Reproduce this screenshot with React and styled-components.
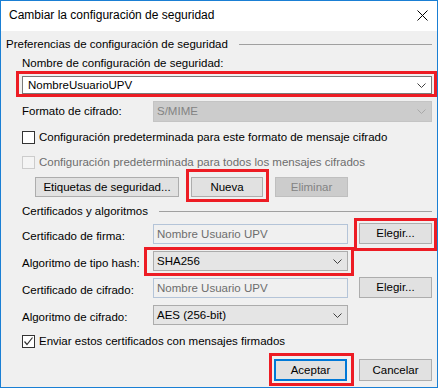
import React from "react";
import styled, { createGlobalStyle } from "styled-components";

const GlobalStyle = createGlobalStyle`
  html, body {
    margin: 0;
    padding: 0;
    background: #ffffff;
  }
  body {
    font-family: "Liberation Sans", Arial, sans-serif;
  }
  * {
    box-sizing: border-box;
  }
`;

const Window = styled.div`
  width: 438px;
  height: 388px;
  border: 1px solid #1a7fd4;
  display: flex;
  flex-direction: column;
  background: #f0f0f0;
  font-size: 11.5px;
  line-height: 15px;
  color: #000000;
`;

const TitleBar = styled.div`
  flex: none;
  height: 30px;
  display: flex;
  align-items: center;
  justify-content: space-between;
  padding: 0 9px 2px 8px;
  background: #ffffff;
  font-size: 12px;
`;

const Client = styled.div`
  flex: 1;
  padding: 0 5px 0 5px;
`;

const GroupHeader = styled.div`
  display: flex;
  align-items: center;
  gap: 11px;
  margin-top: ${p => p.$top}px;
  white-space: nowrap;

  &::after {
    content: "";
    flex: 1;
    height: 1px;
    background: #a0a0a0;
  }
`;

const Section = styled.div`
  padding-left: 16px;
`;

const Label = styled.div`
  margin-top: ${p => p.$top || 0}px;
  white-space: nowrap;
  color: ${p => (p.$disabled ? "#6d6d6d" : "#000000")};
`;

const Mark = styled.div`
  position: relative;
  margin-top: ${p => p.$mt || 0}px;
  justify-self: ${p => p.$justify || "stretch"};
  align-self: ${p => p.$align || "auto"};

  &::after {
    content: "";
    position: absolute;
    top: ${p => -p.$i[0]}px;
    right: ${p => -p.$i[1]}px;
    bottom: ${p => -p.$i[2]}px;
    left: ${p => -p.$i[3]}px;
    border: 3px solid #ed1c24;
    pointer-events: none;
  }
`;

const comboColors = {
  edit: { bg: "#ffffff", border: "#7a7a7a", color: "#000000" },
  list: { bg: "#e5e5e5", border: "#acacac", color: "#000000" },
  disabled: { bg: "#cccccc", border: "#c4c4c4", color: "#838383" },
};

const ComboBox = styled.div`
  height: ${p => p.$h || 20}px;
  display: flex;
  align-items: center;
  justify-content: space-between;
  padding: 0 5px 0 ${p => (p.$variant === "edit" ? 5 : 3)}px;
  border: 1px solid ${p => comboColors[p.$variant].border};
  background: ${p => comboColors[p.$variant].bg};
  color: ${p => comboColors[p.$variant].color};
  white-space: nowrap;
`;

const TextField = styled.div`
  height: 20px;
  display: flex;
  align-items: center;
  padding: 0 3px;
  border: 1px solid #b4c4d8;
  background: #f0f0f0;
  color: #6d6d6d;
  white-space: nowrap;
`;

const Button = styled.div`
  width: ${p => p.$w}px;
  height: ${p => p.$h || 21}px;
  display: flex;
  align-items: center;
  justify-content: center;
  border: ${p => (p.$default ? "2px solid #0078d7" : p.$disabled ? "1px solid #bfbfbf" : "1px solid #adadad")};
  background: ${p => (p.$disabled ? "#cccccc" : "#e1e1e1")};
  color: ${p => (p.$disabled ? "#838383" : "#000000")};
  white-space: nowrap;
`;

const CheckRow = styled.div`
  display: flex;
  align-items: center;
  gap: 4px;
  margin-top: ${p => p.$top}px;
  color: ${p => (p.$disabled ? "#6d6d6d" : "#000000")};
  white-space: nowrap;
`;

const Box = styled.div`
  flex: none;
  width: 13px;
  height: 13px;
  display: flex;
  align-items: center;
  justify-content: center;
  border: 1px solid ${p => (p.$disabled ? "#cccccc" : "#333333")};
  background: ${p => (p.$disabled ? "#f4f4f4" : "#ffffff")};
`;

const FormatRow = styled.div`
  display: grid;
  grid-template-columns: 131px 1fr;
  align-items: center;
  height: 21px;
  margin-top: 7px;
`;

const ButtonRow = styled.div`
  display: flex;
  gap: 12px;
  padding-left: 13px;
  margin-top: 7px;
`;

const FieldGrid = styled.div`
  display: grid;
  grid-template-columns: 131px 195px 1fr;
  grid-auto-rows: 21px;
  row-gap: 6px;
  align-items: end;
  margin-top: 4px;
`;

const Footer = styled.div`
  display: flex;
  justify-content: flex-end;
  gap: 12px;
  margin-top: 10px;
`;

const Chevron = ({ disabled }) => (
  <svg width="9" height="5" viewBox="0 0 9 5">
    <path
      d="M0.5 0.5 L4.5 4.5 L8.5 0.5"
      fill="none"
      stroke={disabled ? "#a8a8a8" : "#404040"}
      strokeWidth="1"
    />
  </svg>
);

const CloseIcon = () => (
  <svg width="11" height="11" viewBox="0 0 11 11">
    <path d="M0.5 0.5 L10.5 10.5 M10.5 0.5 L0.5 10.5" stroke="#000000" strokeWidth="1" />
  </svg>
);

const CheckMark = () => (
  <svg width="11" height="11" viewBox="0 0 11 11">
    <path d="M1.5 5.5 L4 8.5 L9.5 1.5" fill="none" stroke="#333333" strokeWidth="1.2" />
  </svg>
);

const Combo = ({ variant, value, h }) => (
  <ComboBox $variant={variant} $h={h}>
    <span>{value}</span>
    <Chevron disabled={variant === "disabled"} />
  </ComboBox>
);

const Check = ({ checked, disabled, top, children }) => (
  <CheckRow $top={top} $disabled={disabled}>
    <Box $disabled={disabled}>{checked && <CheckMark />}</Box>
    <span>{children}</span>
  </CheckRow>
);

export default function App() {
  return (
    <>
      <GlobalStyle />
      <Window>
        <TitleBar>
          <span>Cambiar la configuración de seguridad</span>
          <CloseIcon />
        </TitleBar>
        <Client>
          <GroupHeader $top={6}>Preferencias de configuración de seguridad</GroupHeader>
          <Section>
            <Label $top={4}>Nombre de configuración de seguridad:</Label>
            <Mark $mt={5} $i={[5, 5, 3, 6]}>
              <Combo variant="edit" value="NombreUsuarioUPV" h={18} />
            </Mark>
            <FormatRow>
              <Label>Formato de cifrado:</Label>
              <Combo variant="disabled" value="S/MIME" h={21} />
            </FormatRow>
            <Check top={8}>Configuración predeterminada para este formato de mensaje cifrado</Check>
            <Check top={10} disabled>
              Configuración predeterminada para todos los mensajes cifrados
            </Check>
            <ButtonRow>
              <Button $w={144} $h={20}>Etiquetas de seguridad...</Button>
              <Mark $i={[8, 6, 5, 5]}>
                <Button $w={72} $h={20}>Nueva</Button>
              </Mark>
              <Button $w={73} $h={20} $disabled>Eliminar</Button>
            </ButtonRow>
            <GroupHeader $top={7}>Certificados y algoritmos</GroupHeader>
            <FieldGrid>
              <Label>Certificado de firma:</Label>
              <TextField>Nombre Usuario UPV</TextField>
              <Mark $justify="end" $i={[5, 5, 7, 5]}>
                <Button $w={73}>Elegir...</Button>
              </Mark>

              <Label>Algoritmo de tipo hash:</Label>
              <Mark $i={[4, 6, 5, 9]}>
                <Combo variant="list" value="SHA256" />
              </Mark>
              <span />

              <Label>Certificado de cifrado:</Label>
              <TextField>Nombre Usuario UPV</TextField>
              <Button $w={73} style={{ justifySelf: "end" }}>Elegir...</Button>

              <Label>Algoritmo de cifrado:</Label>
              <Combo variant="list" value="AES (256-bit)" />
              <span />
            </FieldGrid>
            <Check top={9} checked>Enviar estos certificados con mensajes firmados</Check>
            <Footer>
              <Mark $i={[6, 7, 5, 5]}>
                <Button $w={73} $h={22} $default>Aceptar</Button>
              </Mark>
              <Button $w={73} $h={22}>Cancelar</Button>
            </Footer>
          </Section>
        </Client>
      </Window>
    </>
  );
}
